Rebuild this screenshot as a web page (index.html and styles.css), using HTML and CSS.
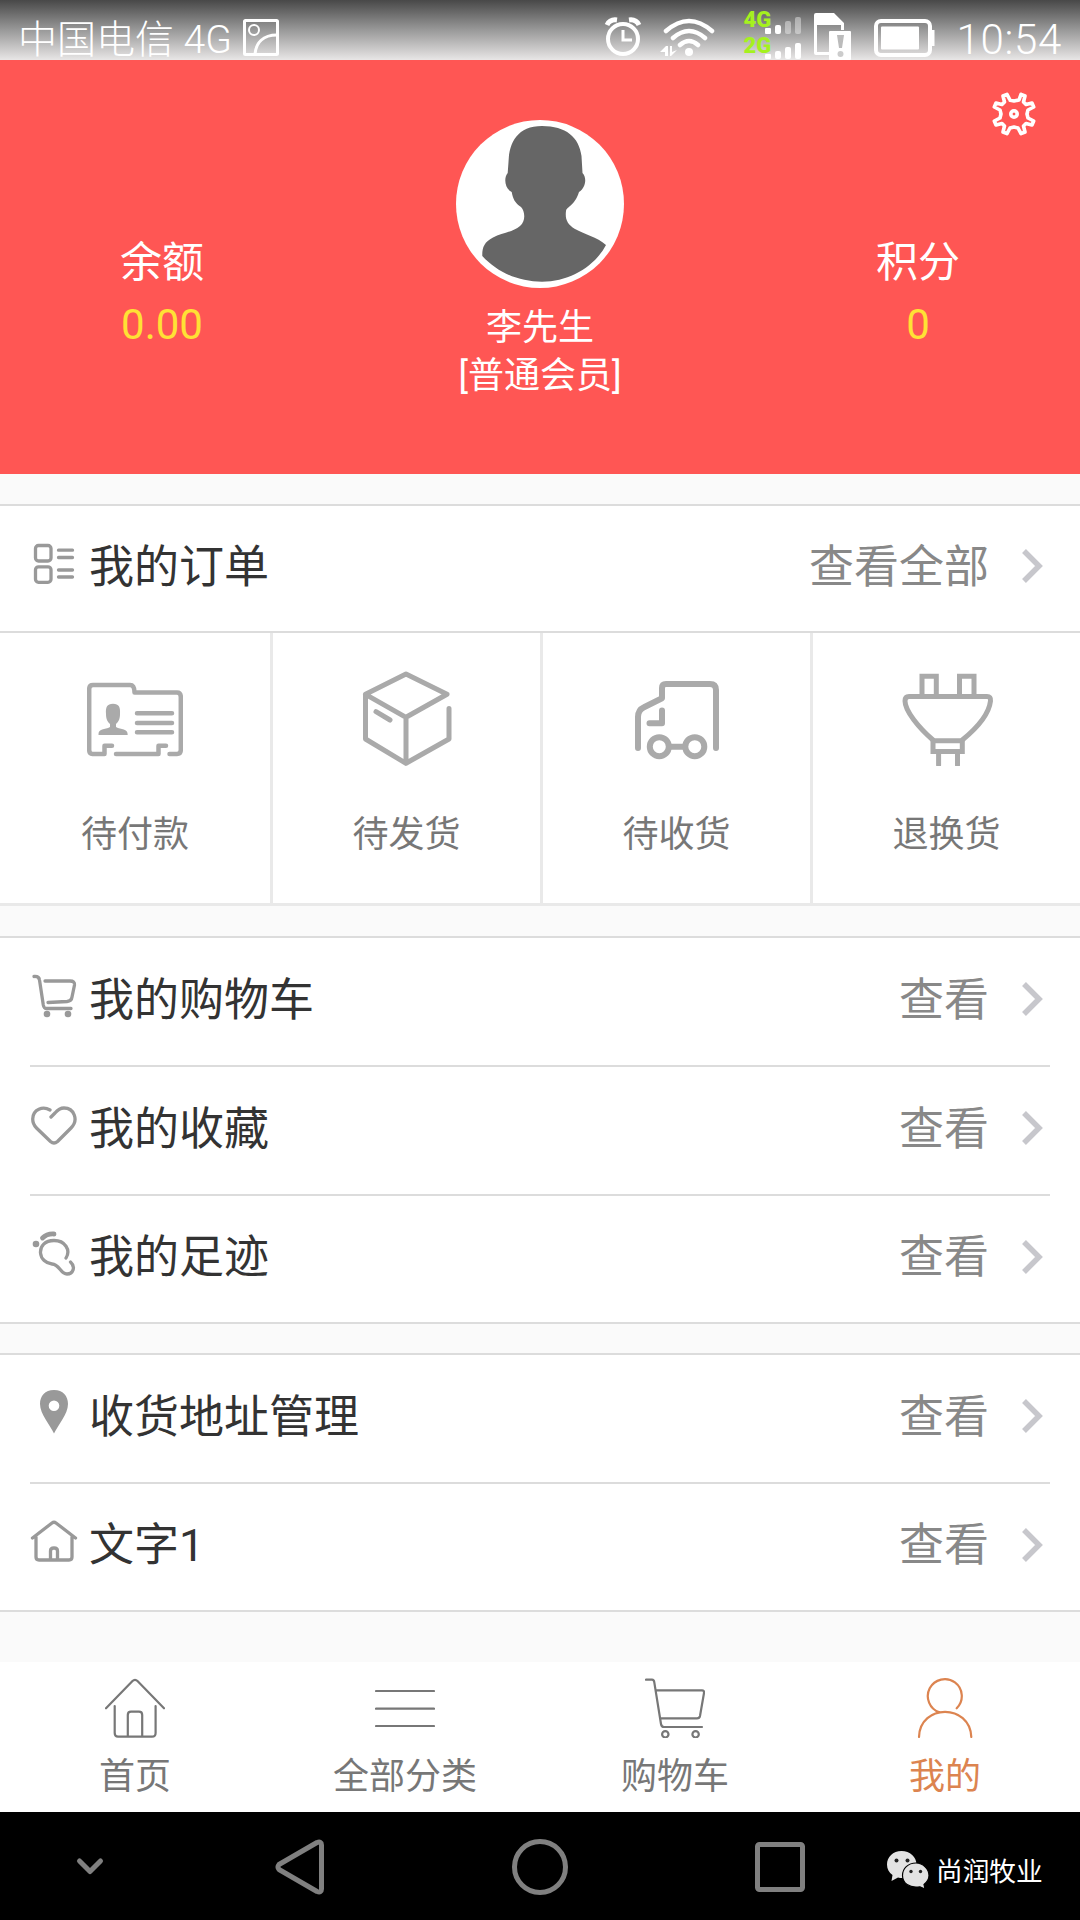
FILE: index.html
```
<!DOCTYPE html>
<html lang="zh-CN">
<head>
    <meta charset="UTF-8">
    <meta name="viewport" content="width=device-width, initial-scale=1.0">
    <title>我的</title>
    <link rel="stylesheet" href="styles.css">
</head>
<body>
    <!-- 状态栏 -->
    <div class="status-bar">
        <span class="carrier">中国电信 4G</span>
        <svg class="pic-icon" width="36" height="37" viewBox="0 0 36 37" fill="none" stroke="#fff" stroke-width="3">
            <rect x="1.5" y="1.5" width="33" height="34" rx="1"/>
            <circle cx="11" cy="11" r="5" stroke-width="2"/>
            <path d="M12 35C13 24 20 16 34 16"/>
        </svg>
        <div class="status-icons">
            <svg width="38" height="48" viewBox="0 0 38 48" fill="none" stroke="#fff" stroke-width="4">
                <circle cx="19" cy="29" r="15"/>
                <path d="M19 20v10h9" stroke-width="3"/>
                <path d="M3 15Q6 9 13 10M35 15Q32 9 25 10" stroke-width="5"/>
            </svg>
            <svg class="wifi" width="56" height="48" viewBox="0 0 56 48" fill="none" stroke="#fff" stroke-width="4.5" stroke-linecap="round">
                <path d="M6 21Q29 1 52 21M13 28Q29 14 45 28M20 35Q29 27 38 35"/>
                <circle cx="29" cy="42" r="4" fill="#fff" stroke="none"/>
                <path d="M0 42l6-6h2v10H5v-4zM10 36h2v6l5-2-6 6h-1z" fill="#fff" stroke="none"/>
            </svg>
            <div class="networks"><span>4G</span><span>2G</span></div>
            <svg class="signal" width="38" height="60" viewBox="0 0 38 60" fill="#fff">
                <rect x="0" y="28" width="6" height="6" rx="1"/>
                <rect x="10" y="25" width="6" height="9" rx="2"/>
                <rect x="20" y="21" width="6" height="13" rx="2" opacity=".4"/>
                <rect x="30" y="17" width="6" height="17" rx="2" opacity=".4"/>
                <rect x="0" y="54" width="6" height="5" rx="1"/>
                <rect x="10" y="51" width="6" height="8" rx="2"/>
                <rect x="20" y="47" width="6" height="12" rx="2"/>
                <rect x="30" y="43" width="6" height="16" rx="2"/>
            </svg>
            <svg class="sim" width="38" height="60" viewBox="0 0 38 60">
                <path d="M2 13h18l10 10v7h-3v-5H3v27h13v3H2q-2 0-2-2V15q0-2 2-2z" fill="#fff"/>
                <rect x="15" y="31" width="22" height="29" rx="1" fill="#fff"/>
                <path d="M23 35h7l-2 13h-3z" fill="#bbb"/>
                <circle cx="26.500" cy="54" r="3" fill="#ccc"/>
            </svg>
            <svg class="battery" width="61" height="38" viewBox="0 0 61 38" fill="none" stroke="#fff" stroke-width="4">
                <rect x="2" y="2" width="54" height="34" rx="5"/>
                <rect x="7" y="7.500" width="38" height="23" rx="1" fill="#fff" stroke="none"/>
                <path d="M58.500 11v16"/>
            </svg>
            <span class="clock">10:54</span>
        </div>
    </div>

    <!-- 用户信息 -->
    <div class="header">
        <div class="asset">
            <div class="asset-name">余额</div>
            <div class="asset-value">0.00</div>
        </div>
        <div class="user">
            <svg class="avatar" width="168" height="168" viewBox="0 0 168 168">
                <circle cx="84" cy="84" r="84" fill="#fff"/>
                <path d="M86 6C62 6 53 22 52.500 42L51.700 53C48 57 48 68 55.700 72C57 79 59 83 65 87C69 91 70 101 64 106C57 112 46 113 37 117.500C28 122 26 128 26.300 136C42 153 63 161.700 86 161.700C114 161.700 139 146 150 125C141 117 128 114 119 109C111 104 109 99 110 91C111 86 118 87 123 72C130 68 131 57 126.500 53L125.500 36C123 17 110 6 86 6z" fill="#666"/>
            </svg>
            <div class="user-name">李先生</div>
            <div class="user-name">[普通会员]</div>
        </div>
        <div class="asset">
            <div class="asset-name">积分</div>
            <div class="asset-value">0</div>
        </div>
        <svg class="setting" width="44" height="44" viewBox="-22 -22 44 44" fill="none" stroke="#fff" stroke-width="3.6" stroke-linejoin="round">
            <path d="M-5 -14L0 -13L5 -14L7 -19.700L11 -18L9.500 -12L12 -9.500L18 -11L19.700 -7L14 -4L13 0L14 4L19.700 7L18 11L12 9.500L9.500 12L11 18L7 19.700L4 14L0 13L-4 14L-7 19.700L-11 18L-9.500 12L-12 9.500L-18 11L-19.700 7L-14 4L-13 0L-14 -4L-19.700 -7L-18 -11L-12 -9.500L-9.500 -12L-11 -18L-7 -19.700L-4 -14"/>
            <circle r="3.200"/>
        </svg>
    </div>

    <!-- 我的订单 -->
    <div class="panel orders">
        <a class="row">
            <svg class="row-icon" viewBox="0 0 48 48">
                <rect x="5.500" y="6.500" width="15.500" height="15.500" rx="3"/>
                <rect x="5.500" y="27.800" width="15.500" height="15.500" rx="3"/>
                <path d="M28.500 11.200h14M28.500 18.500h14M28.500 31h14M28.500 38h14"/>
            </svg>
            <span class="row-name">我的订单</span>
            <span class="row-more">查看全部</span>
            <svg class="arrow" viewBox="0 0 24 36"><path d="M3 3l15 15L3 33"/></svg>
        </a>
        <div class="order-grid">
            <a class="order-item">
                <svg class="order-icon" viewBox="0 0 96 96" stroke-width="4.500">
                    <path d="M25 75.700h-7.500V84H5.500Q2.200 84 2.200 80V19Q2.200 15 6 15H43Q47.500 15 47.500 22.500H90Q93.800 22.500 93.800 27V80Q93.800 84 90 84H82.500M29 84H71.500V75.700H79"/>
                    <path d="M50 43.300h35M50 53h35M50 62.300h35"/>
                    <path d="M26 33.700C20 33.700 18.500 37 19 44C19 50 21 52 23 54V57C18 60 11 58 11.500 65H40.700C41 58 34 60 29 57V54C31 52 33 50 33 44C33.500 37 32 33.700 26 33.700z" fill="#aaa" stroke="none"/>
                </svg>
                <span>待付款</span>
            </a>
            <a class="order-item">
                <svg class="order-icon" viewBox="0 0 96 96" stroke-width="5">
                    <path d="M47 47.300L6.500 24.300L47 4L88 24.300L47 47.300V93.300L6.500 69V24.300M47 93.300L90 69V38.500M17 41.700L31 50"/>
                </svg>
                <span>待发货</span>
            </a>
            <a class="order-item">
                <svg class="order-icon" viewBox="0 0 96 96" stroke-width="6">
                    <path d="M9 78V47Q9 40 15 37.300L33 28.300V18Q33 14 37 14H81Q87 14 87 20V78M33 40.500V53.300H20.500M40 76.700H56"/>
                    <circle cx="30.300" cy="76.700" r="9.500"/>
                    <circle cx="65.800" cy="76.700" r="9.500"/>
                </svg>
                <span>待收货</span>
            </a>
            <a class="order-item">
                <svg class="order-icon" viewBox="0 0 96 96" stroke-width="5">
                    <path d="M23 26V6.200H37.300V26M60.500 26V6.200H75V26" stroke-linejoin="miter"/>
                    <path d="M34 70C20 58 6 41 6 31Q6 26.500 10 26.500H88Q92 26.500 91.500 31C90 44 78 58 63.300 70"/>
                    <path d="M34 70.700H63.300V81.500H34zM39.600 82V95M58.500 82V95" stroke-linejoin="miter"/>
                </svg>
                <span>退换货</span>
            </a>
        </div>
    </div>

    <div class="panel">
        <a class="row">
            <svg class="row-icon" viewBox="0 0 48 48">
                <path d="M4 4.500Q9 4 9.500 8L13.300 33Q14 36.500 16 36.500H41"/>
                <path d="M15 9H40Q45 9 44.500 13L42 25Q41.500 29 37 29.500L18 30.500"/>
                <circle class="solid" cx="17" cy="42" r="3.300"/>
                <circle class="solid" cx="38" cy="42" r="3.300"/>
            </svg>
            <span class="row-name">我的购物车</span>
            <span class="row-more">查看</span>
            <svg class="arrow" viewBox="0 0 24 36"><path d="M3 3l15 15L3 33"/></svg>
        </a>
        <a class="row">
            <svg class="row-icon" viewBox="0 0 48 48">
                <path d="M20 9C13 5 3 8 2.700 18C2.700 22 4 24.500 6.500 27L20.500 40.500Q24 43.500 27.500 40.500L41 27C49 19 44 7 34 7C30 7 27.500 9 25 12L21 16"/>
            </svg>
            <span class="row-name">我的收藏</span>
            <span class="row-more">查看</span>
            <svg class="arrow" viewBox="0 0 24 36"><path d="M3 3l15 15L3 33"/></svg>
        </a>
        <a class="row">
            <svg class="row-icon" viewBox="0 0 48 48">
                <circle class="solid" cx="6" cy="14" r="3.300"/>
                <path d="M12.500 8Q17 3.500 24 4" stroke-width="4.800"/>
                <path d="M36 28C41 20 35 10.500 24 10.500C15 10.500 10 16 10.500 23C11 29 16 33.500 22 34C30 34.500 30 44 37 44C43 44 46 37 40.500 32"/>
            </svg>
            <span class="row-name">我的足迹</span>
            <span class="row-more">查看</span>
            <svg class="arrow" viewBox="0 0 24 36"><path d="M3 3l15 15L3 33"/></svg>
        </a>
    </div>

    <div class="panel last">
        <a class="row">
            <svg class="row-icon" viewBox="0 0 48 48">
                <path class="solid" fill-rule="evenodd" d="M24 1C15 1 10 7 10 15C10 25 20 36 24 44.500C28 36 38 25 38 15C38 7 33 1 24 1zM24 11.400a5.300 5.300 0 1 1 0 10.600a5.300 5.300 0 1 1 0-10.600z"/>
            </svg>
            <span class="row-name">收货地址管理</span>
            <span class="row-more">查看</span>
            <svg class="arrow" viewBox="0 0 24 36"><path d="M3 3l15 15L3 33"/></svg>
        </a>
        <a class="row">
            <svg class="row-icon" viewBox="0 0 48 48">
                <path d="M2.500 20L22 5Q24 3.500 26 5L45.500 20M6 19V39Q6 42 9 42H39Q42 42 42 39V19"/>
                <path d="M20.500 41V33Q20.500 30 24 30Q27.500 30 27.500 33V41"/>
            </svg>
            <span class="row-name">文字1</span>
            <span class="row-more">查看</span>
            <svg class="arrow" viewBox="0 0 24 36"><path d="M3 3l15 15L3 33"/></svg>
        </a>
    </div>

    <!-- 底部菜单 -->
    <div class="tab-bar">
        <a class="tab">
            <svg viewBox="0 0 60 60">
                <path d="M1 30.300L27.500 3Q30 .500 32.500 3L59 30.300M9.700 28V55Q9.700 58.700 13 58.700H47Q50.600 58.700 50.600 55V28M22.800 58V37Q22.800 33.700 26 33.700H34Q37.200 33.700 37.200 37V58"/>
            </svg>
            <span>首页</span>
        </a>
        <a class="tab">
            <svg viewBox="0 0 60 60"><path d="M1 13h58M1 30.700h58M1 48h58"/></svg>
            <span>全部分类</span>
        </a>
        <a class="tab">
            <svg viewBox="0 0 60 60">
                <path d="M1 1.700H7Q9 1.700 9.300 4.300L16 46Q16.500 49 19 49H57M11 12.300H57Q59.300 12.300 59 15L55 38Q54.500 40.300 52 40.300H15.500"/>
                <circle cx="20.300" cy="56.300" r="3.200"/>
                <circle cx="50.600" cy="56.300" r="3.200"/>
            </svg>
            <span>购物车</span>
        </a>
        <a class="tab active">
            <svg viewBox="0 0 60 60">
                <path d="M41.700 30.300A17 17 0 1 0 24.500 34.300M4 59C5 25.500 55 25.500 56.300 59"/>
            </svg>
            <span>我的</span>
        </a>
    </div>

    <!-- 系统导航键 -->
    <div class="nav-bar">
        <div class="nav-key small">
            <svg width="30" height="20" viewBox="0 0 30 20"><path d="M4.500 4L15 14.500L25.500 4"/></svg>
        </div>
        <div class="nav-key">
            <svg width="50" height="56" viewBox="0 0 50 56"><path d="M4 25.500L42 3.500Q46.500 2 46.500 6V50Q46.500 54 42 52.500L4 30.500Q2 28 4 25.500z"/></svg>
        </div>
        <div class="nav-key">
            <svg width="58" height="58" viewBox="0 0 58 58"><circle cx="29" cy="29" r="25.500"/></svg>
        </div>
        <div class="nav-key">
            <svg width="50" height="50" viewBox="0 0 50 50"><rect x="2.500" y="2.500" width="45" height="45" rx="2"/></svg>
        </div>
        <div class="watermark">
            <svg width="44" height="40" viewBox="0 0 44 40">
                <path d="M15.500 1C7 1 1 7 1 14.500C1 19 3 22.500 6.500 25L5.500 31L12 27.500C22 30 30.500 23 30.500 14.500C30.500 7 24 1 15.500 1z" fill="#e3e3e3"/>
                <path d="M30 13C22 13 16.500 18.500 16.500 25.500C16.500 33 23 38.500 34 36.800L39 39L38 34.500C41 32 43 29 43 25.500C43 19 37 13 30 13z" fill="#e3e3e3" stroke="#000" stroke-width="1.200"/>
                <g fill="#222"><circle cx="10.500" cy="10.500" r="2"/><circle cx="21.500" cy="10.500" r="2"/><circle cx="25" cy="21.500" r="1.700"/><circle cx="34.500" cy="21.500" r="1.700"/></g>
            </svg>
            <span>尚润牧业</span>
        </div>
    </div>
</body>
</html>
```
FILE: styles.css
```
* {
    box-sizing: border-box;
}

body {
    font-family: Roboto, "Noto Sans CJK SC", sans-serif;
    background-color: #fafafa;
    width: 1080px;
    height: 1920px;
    margin: 0;
    overflow: hidden;
    display: flex;
    flex-direction: column;
}

svg {
    display: block;
    flex: none;
}

/* 状态栏 */
.status-bar {
    height: 60px;
    flex: none;
    display: flex;
    align-items: flex-start;
    padding-left: 18px;
    padding-right: 18px;
    color: #fff;
    font-weight: 300;
    background: linear-gradient(#484848, #999 50%, #e8e6e6);
}

.carrier {
    font-size: 39px;
    line-height: 60px;
    padding-top: 10px;
    height: 60px;
}

.pic-icon {
    margin: 19px 0 0 11px;
}

.status-icons {
    margin-left: auto;
    display: flex;
    height: 60px;
}

.status-icons svg {
    margin-top: 10px;
}

.status-icons .wifi {
    margin-left: 18px;
}

.networks {
    width: 27px;
    margin-left: 27px;
    padding-top: 7px;
    display: flex;
    flex-direction: column;
    font-size: 22px;
    font-weight: 900;
    line-height: 26px;
    color: #a5f11f;
}

.status-icons .signal {
    margin: 0 0 0 -5px;
}

.status-icons .sim {
    margin: 0 0 0 11px;
}

.status-icons .battery {
    margin: 19px 0 0 22px;
}

.clock {
    margin-left: 21px;
    font-size: 42px;
    letter-spacing: 0.7px;
    line-height: 60px;
    padding-top: 10px;
}

/* 用户信息 */
.header {
    position: relative;
    height: 414px;
    flex: none;
    display: flex;
    background: #ff5654;
    color: #fff;
    text-align: center;
}

.asset {
    width: 30%;
    padding-top: 172px;
}

.asset-name {
    font-size: 42px;
    line-height: 62px;
}

.asset-value {
    font-size: 42px;
    line-height: 62px;
    color: #ffe135;
}

.user {
    width: 40%;
    padding-top: 60px;
}

.avatar {
    margin: 0 auto 16px;
}

.user-name {
    font-size: 36px;
    line-height: 48px;
}

.setting {
    position: absolute;
    top: 32px;
    right: 44px;
}

/* 列表 */
.panel {
    margin-top: 30px;
    background: #fff;
    border-top: 2px solid #dcdcdc;
    border-bottom: 2px solid #dcdcdc;
    flex: none;
}

.orders {
    border-bottom: 3px solid #e9e9e9;
}

.panel.last {
    margin-top: 29px;
}

.row {
    display: flex;
    align-items: center;
    height: 129px;
    margin: 0 30px;
    font-size: 45px;
    line-height: 60px;
    border-bottom: 2px solid #dcdcdc;
}

.row:last-child {
    height: 126px;
    border-bottom: none;
}

.orders .row {
    height: 125px;
    border-bottom: none;
}

.row-icon {
    width: 48px;
    height: 48px;
    margin: 0 11px 11px 0;
    fill: none;
    stroke: #999;
    stroke-width: 3.3;
    stroke-linecap: round;
    stroke-linejoin: round;
}

.row-icon .solid {
    fill: #999;
    stroke: none;
}

.row-name {
    color: #333;
    margin-bottom: 2px;
}

.row-more {
    margin-left: auto;
    margin-bottom: 2px;
    color: #888;
}

.arrow {
    width: 24px;
    height: 36px;
    margin: 0 5px 5px 32px;
    fill: none;
    stroke: #c7c7cc;
    stroke-width: 5.5;
}

.order-grid {
    display: flex;
    height: 272px;
    border-top: 2px solid #dcdcdc;
}

.order-item {
    width: 270px;
    display: flex;
    flex-direction: column;
    align-items: center;
    padding-top: 37px;
    font-size: 36px;
    line-height: 48px;
    color: #777;
}

.order-item + .order-item {
    border-left: 3px solid #e9e9e9;
}

.order-icon {
    width: 96px;
    height: 96px;
    margin-bottom: 45px;
    fill: none;
    stroke: #aaa;
    stroke-linecap: round;
    stroke-linejoin: round;
}

/* 底部菜单 */
.tab-bar {
    height: 150px;
    flex: none;
    margin-top: auto;
    display: flex;
    background: #fff;
}

.tab {
    width: 25%;
    display: flex;
    flex-direction: column;
    align-items: center;
    padding-top: 16px;
    font-size: 36px;
    line-height: 48px;
    color: #777;
}

.tab svg {
    width: 60px;
    height: 60px;
    margin-bottom: 15px;
    fill: none;
    stroke: currentColor;
    stroke-width: 2.2;
    stroke-linecap: round;
    stroke-linejoin: round;
}

.tab.active {
    color: #dc8450;
}

/* 系统导航键 */
.nav-bar {
    position: relative;
    height: 108px;
    flex: none;
    display: flex;
    background: #000;
}

.nav-key {
    width: 240px;
    height: 110px;
    display: flex;
    align-items: center;
    justify-content: center;
}

.nav-key.small {
    width: 180px;
}

.nav-key svg {
    fill: none;
    stroke: #808080;
    stroke-width: 5;
    stroke-linecap: round;
    stroke-linejoin: round;
}

.watermark {
    position: absolute;
    left: 886px;
    top: 38px;
    display: flex;
    gap: 6px;
    color: #fff;
    font-size: 26.7px;
    line-height: 44px;
}
```
